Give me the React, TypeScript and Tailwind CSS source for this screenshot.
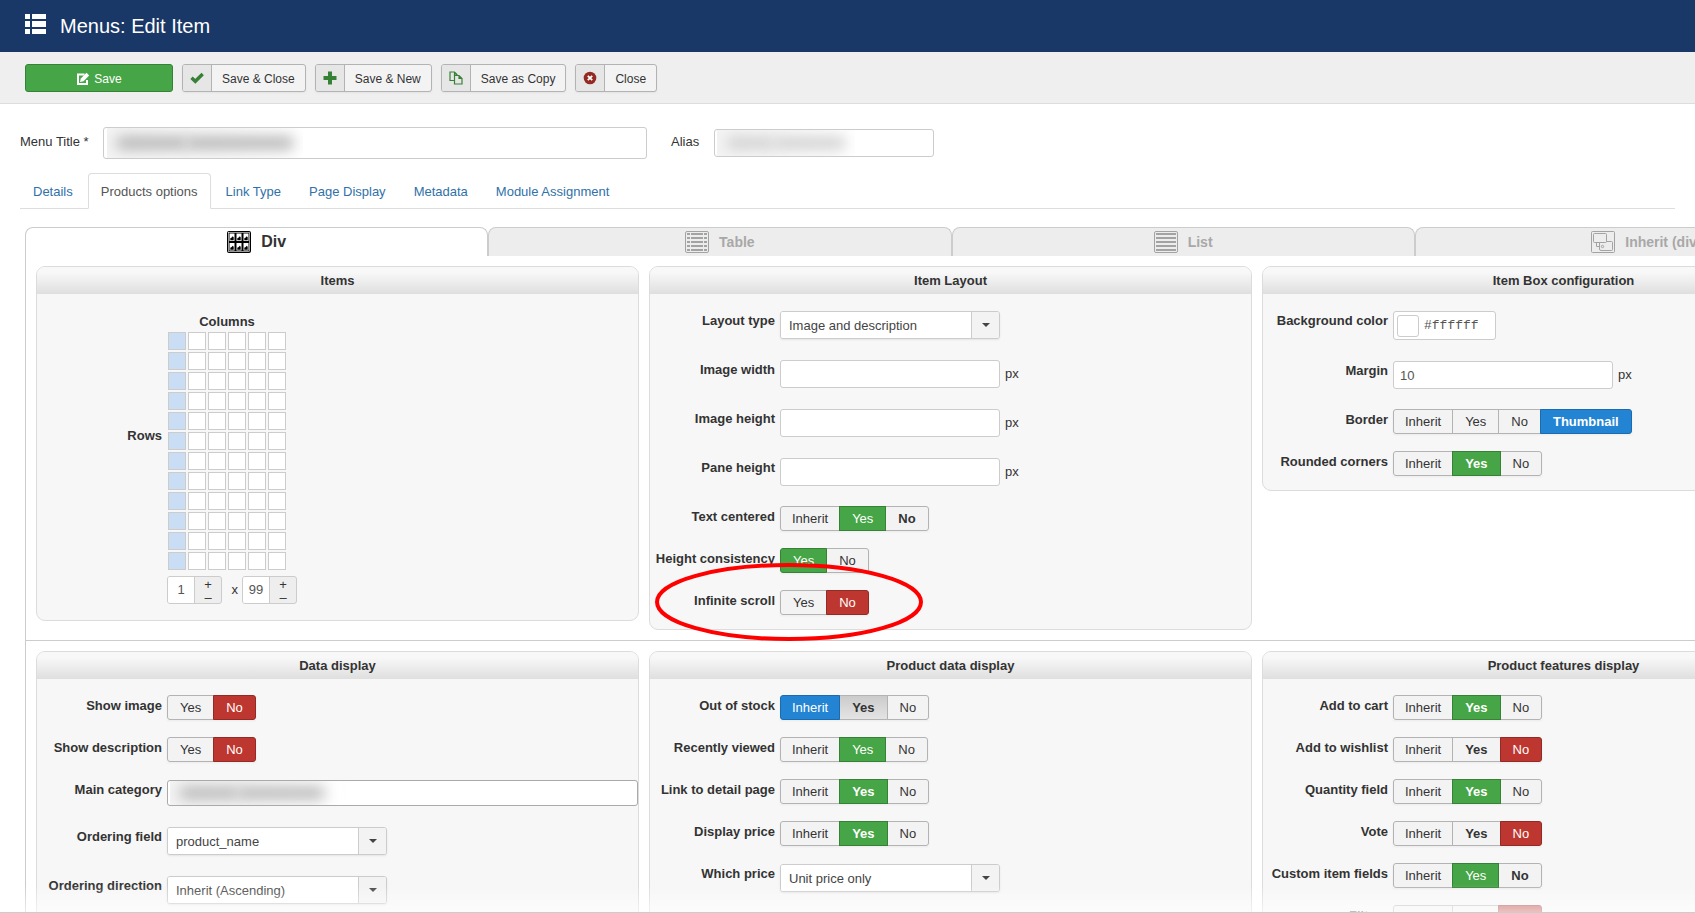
import type { ReactNode } from 'react';
import clsx from 'clsx';

function ListIcon() {
  return (
    <svg width="22" height="22" viewBox="0 0 22 22" fill="#fff" aria-hidden="true">
      <path d="M0 1h5v5H0zM7 1h14v5H7zM0 8h5v6H0zM7 8h14v6H7zM0 16h5v5H0zM7 16h14v5H7z" />
    </svg>
  );
}

function EditIcon() {
  return (
    <svg width="14" height="14" viewBox="0 0 14 14" aria-hidden="true">
      <path d="M8.500 2.500H2v9.500h9V8" fill="none" stroke="#fff" strokeWidth="2" />
      <path d="M4 10l.8-3.500L10.500.800 13.200 3.500 7.500 9.200z" fill="#fff" />
    </svg>
  );
}

function CheckIcon() {
  return (
    <svg width="14" height="14" viewBox="0 0 14 14" aria-hidden="true">
      <path d="M1.500 6.800L5.300 10.300 12.700 3" fill="none" stroke="#378137" strokeWidth="3.400" />
    </svg>
  );
}

function PlusIcon() {
  return (
    <svg width="14" height="14" viewBox="0 0 14 14" fill="#378137" aria-hidden="true">
      <path d="M5 .500h4V5h4.500v4H9v4.500H5V9H.500V5H5z" />
    </svg>
  );
}

function CopyIcon() {
  return (
    <svg width="14" height="14" viewBox="0 0 14 14" fill="none" stroke="#378137" strokeWidth="1.200" aria-hidden="true">
      <path d="M5 9.500H1V1h4.500L8 3.500V5M5.500 1v3H8" />
      <path d="M5.500 4.500h4.500l3 3v5.500H5.500zM10 4.500v3h3" />
    </svg>
  );
}

function CancelIcon() {
  return (
    <svg width="14" height="14" viewBox="0 0 14 14" aria-hidden="true">
      <circle cx="7" cy="7" r="6.300" fill="#942a25" />
      <path d="M4.800 4.800l4.400 4.400M9.200 4.800L4.800 9.200" stroke="#fff" strokeWidth="1.800" />
    </svg>
  );
}

function DivIcon() {
  const xs = [2.5, 9.5, 16.5];
  const ys = [2.5, 12];
  return (
    <svg width="24" height="22" viewBox="0 0 24 22" aria-hidden="true">
      <rect width="24" height="22" rx="2" fill="#000" />
      <rect x="1.500" y="1.500" width="21" height="19" fill="none" stroke="#fff" strokeWidth=".6" />
      {ys.map((y) =>
        xs.map((x) => (
          <g key={`${x}-${y}`}>
            <rect x={x} y={y} width="5" height="7.5" fill="#fff" />
            <path d={`M${x + 0.8} ${y + 6.8}v-2l1.400-.8 1-1.200 1 1v3z`} fill="#000" />
          </g>
        )),
      )}
    </svg>
  );
}

function TableIcon() {
  return (
    <svg width="24" height="22" viewBox="0 0 24 22" fill="none" stroke="#a3a3a3" aria-hidden="true">
      <rect x=".5" y=".5" width="23" height="21" rx="1.500" />
      <path d="M2 3h20M2 7h20M2 11h20M2 15h20M2 19h20" strokeWidth="2" />
      <path d="M5.500 1v20M18.500 1v20" stroke="#ededed" />
    </svg>
  );
}

function RowsIcon() {
  return (
    <svg width="24" height="22" viewBox="0 0 24 22" fill="none" stroke="#a3a3a3" aria-hidden="true">
      <rect x=".5" y=".5" width="23" height="21" rx="1.500" />
      <path d="M2 3h20M2 7h20M2 11h20M2 15h20M2 19h20" strokeWidth="2" />
    </svg>
  );
}

function InheritIcon() {
  return (
    <svg width="24" height="22" viewBox="0 0 24 22" fill="none" stroke="#a3a3a3" aria-hidden="true">
      <rect x=".5" y=".5" width="23" height="21" rx="1" />
      <rect x="2.500" y="2.500" width="13" height="9" rx="1" />
      <path d="M15.500 10.500h5a1 1 0 0 1 1 1v7a1 1 0 0 1-1 1h-10.500a1.500 1.500 0 0 1-1.500-1.500v-6.500" />
      <path d="M5.500 11.500v4h3" />
      <circle cx="11.500" cy="15.500" r="1.200" />
    </svg>
  );
}

function ToolbarButton({ icon, children }: { icon: ReactNode; children: ReactNode }) {
  return (
    <button
      type="button"
      className="flex h-7 items-stretch overflow-hidden rounded-[3px] border border-[#b3b3b3] bg-[#f3f3f3] text-xs text-[#333] shadow-[0_1px_2px_rgba(0,0,0,0.05)]"
    >
      <span className="flex w-[29px] items-center justify-center border-r border-[#b3b3b3] bg-[#e6e6e6]">
        {icon}
      </span>
      <span className="flex items-center px-[10px] pt-px">{children}</span>
    </button>
  );
}

type Tone = 'green' | 'red' | 'blue' | 'pressed';
type Option = { text: string; tone?: Tone; bold?: boolean };

const tones: Record<Tone, string> = {
  green: 'z-10 border-[#378137] bg-[#46a546] text-white',
  red: 'z-10 border-[#942a25] bg-[#bd362f] text-white',
  blue: 'z-10 border-[#1a6bb0] bg-[#2384d3] text-white',
  pressed: 'border-[#b3b3b3] bg-linear-to-b from-[#cbcbcb] to-[#e4e4e4] text-[#333]',
};

function Toggle({ label, options }: { label: string; options: Option[] }) {
  return (
    <div role="group" aria-label={label} className="flex shadow-[0_1px_2px_rgba(0,0,0,0.05)]">
      {options.map((option) => (
        <button
          key={option.text}
          type="button"
          className={clsx(
            'relative -ml-px h-[25px] border text-[13px] leading-5 first:ml-0 first:rounded-l-[3px] last:rounded-r-[3px]',
            option.text === 'Inherit' ? 'px-[11px]' : 'px-3',
            option.tone ? tones[option.tone] : 'border-[#b3b3b3] bg-[#f3f3f3] text-[#333]',
            option.bold && 'font-bold',
          )}
        >
          {option.text}
        </button>
      ))}
    </div>
  );
}

function Field({ label, id, children }: { label: string; id?: string; children: ReactNode }) {
  const style = 'w-[125px] shrink-0 text-right text-[13px] leading-[22px] font-bold whitespace-nowrap';
  return (
    <div className="relative flex items-start gap-[5px]">
      {id ? (
        <label htmlFor={id} className={style}>
          {label}
        </label>
      ) : (
        <span className={style}>{label}</span>
      )}
      {children}
    </div>
  );
}

function ToggleField({ label, options, children }: { label: string; options: Option[]; children?: ReactNode }) {
  return (
    <Field label={label}>
      <Toggle label={label} options={options} />
      {children}
    </Field>
  );
}

function PixelField({ label, id, value }: { label: string; id: string; value?: string }) {
  return (
    <Field label={label} id={id}>
      <div className="flex items-center gap-[5px] pt-px pb-[3px]">
        <input
          id={id}
          type="text"
          defaultValue={value}
          className="h-7 w-[220px] rounded-[3px] border border-[#ccc] bg-white px-[6px] text-[13px] text-[#555]"
        />
        <span className="text-[13px]">px</span>
      </div>
    </Field>
  );
}

function SelectField({ label, id, value }: { label: string; id: string; value: string }) {
  return (
    <Field label={label} id={id}>
      <div className="pt-px pb-[3px]">
        <div className="flex h-7 w-[220px] overflow-hidden rounded-[3px] border border-[#ccc] bg-white shadow-[0_1px_2px_rgba(0,0,0,0.08)]">
          <select id={id} className="min-w-0 flex-1 appearance-none bg-white px-2 pt-px text-[13px] text-[#444]">
            <option>{value}</option>
          </select>
          <span className="flex w-7 items-center justify-center border-l border-[#ccc] bg-[#f3f3f3]">
            <svg width="8" height="4" viewBox="0 0 8 4" aria-hidden="true">
              <path d="M0 0h8L4 4z" fill="#444" />
            </svg>
          </span>
        </div>
      </div>
    </Field>
  );
}

function Panel({ title, children }: { title: string; children: ReactNode }) {
  return (
    <section className="rounded-[9px] border border-[#dcdcdc] bg-[#f7f7f7]">
      <h3 className="rounded-t-[8px] bg-linear-to-b from-[#f8f8f8] from-20% to-[#dfdfdf] pt-px text-center text-[13px] leading-[26px] font-bold">
        {title}
      </h3>
      <div className="flex flex-col gap-[17px] pt-4 pb-[14px]">{children}</div>
    </section>
  );
}

function Stepper({ label, value }: { label: string; value: string }) {
  return (
    <div className="flex h-7 overflow-hidden rounded-[3px] border border-[#ccc] bg-[#eee]">
      <input
        type="text"
        aria-label={label}
        defaultValue={value}
        className="w-[27px] border-r border-[#ccc] bg-white text-center text-[13px] text-[#555]"
      />
      <div className="flex w-[26px] flex-col text-[13px] leading-[13px]">
        <button type="button" aria-label={`More ${label}`} className="h-[15px]">
          +
        </button>
        <button type="button" aria-label={`Fewer ${label}`} className="h-[11px] leading-[11px]">
          –
        </button>
      </div>
    </div>
  );
}

function ItemGrid() {
  return (
    <div className="flex flex-col">
      <div className="flex items-center gap-[5px]">
        <span className="w-[125px] pb-2 text-right text-[13px] font-bold">Rows</span>
        <div className="pl-px">
          <p className="pt-[2px] text-center text-[13px] leading-5 font-bold">Columns</p>
          <div className="grid grid-cols-6 gap-[2px]">
            {Array.from({ length: 72 }, (_, i) => (
              <span
                key={i}
                className={clsx('size-[18px] border border-[#ccc]', i % 6 === 0 ? 'bg-[#c9def5]' : 'bg-white')}
              />
            ))}
          </div>
        </div>
      </div>
      <div className="flex items-center pt-[6px] pb-[2px] pl-[130px] text-[13px]">
        <Stepper label="columns" value="1" />
        <span className="w-5 pr-1 text-right">x</span>
        <Stepper label="rows" value="99" />
      </div>
    </div>
  );
}

// smudge over values that must not be readable
function Redacted({ className }: { className: string }) {
  return (
    <span className={clsx('pointer-events-none absolute overflow-hidden bg-linear-to-r from-[#f4f4f4] to-white', className)}>
      <span className="flex h-full items-center px-[10px]">
        <span className="h-3 flex-2 bg-current blur-[7px]" />
        <span className="h-3 flex-3 bg-current blur-[7px]" />
      </span>
    </span>
  );
}

const pageTabs = ['Details', 'Products options', 'Link Type', 'Page Display', 'Metadata', 'Module Assignment'];

const layoutTabs = [
  { text: 'Div', icon: <DivIcon /> },
  { text: 'Table', icon: <TableIcon /> },
  { text: 'List', icon: <RowsIcon /> },
  { text: 'Inherit (div)', icon: <InheritIcon /> },
];

const inherit: Option = { text: 'Inherit' };
const yes: Option = { text: 'Yes' };
const no: Option = { text: 'No' };
const green: Option = { text: 'Yes', tone: 'green' };
const greenBold: Option = { text: 'Yes', tone: 'green', bold: true };
const red: Option = { text: 'No', tone: 'red' };
const yesBold: Option = { text: 'Yes', bold: true };
const noBold: Option = { text: 'No', bold: true };

export default function App() {
  return (
    <div className="flex h-screen flex-col overflow-hidden bg-white font-['Liberation_Sans',Arial,sans-serif] text-[13px] text-[#333]">
      <header className="flex h-[52px] shrink-0 items-center gap-[13px] bg-[#1a3867] px-[25px] pb-1 text-white">
        <ListIcon />
        <h1 className="pt-1 text-xl">Menus: Edit Item</h1>
      </header>

      <div className="flex h-[52px] shrink-0 items-start gap-[9px] border-b border-[#ddd] bg-[#efefef] px-[25px] pt-3">
        <button
          type="button"
          className="flex h-7 w-[148px] items-center justify-center gap-1 rounded-[3px] border border-[#378137] bg-[#46a546] pt-px text-xs text-white"
        >
          <EditIcon />
          Save
        </button>
        <ToolbarButton icon={<CheckIcon />}>Save &amp; Close</ToolbarButton>
        <ToolbarButton icon={<PlusIcon />}>Save &amp; New</ToolbarButton>
        <ToolbarButton icon={<CopyIcon />}>Save as Copy</ToolbarButton>
        <ToolbarButton icon={<CancelIcon />}>Close</ToolbarButton>
      </div>

      <main className="relative min-h-0 flex-1 overflow-hidden border-b border-[#ccc] pt-[23px]">
        <div className="flex items-center px-5">
          <label htmlFor="title" className="w-[83px] pb-[2px]">
            Menu Title *
          </label>
          <div className="relative">
            <input id="title" type="text" className="block h-8 w-[544px] rounded-[3px] border border-[#ccc] bg-white" />
            <Redacted className="top-px left-1 h-[30px] w-[196px] text-[#b0b0b0]" />
          </div>
          <label htmlFor="alias" className="w-[67px] pb-[2px] pl-6">
            Alias
          </label>
          <div className="relative">
            <input id="alias" type="text" className="block h-7 w-[220px] rounded-[3px] border border-[#ccc] bg-white" />
            <Redacted className="top-px left-[3px] h-[26px] w-[138px] text-[#cecece]" />
          </div>
        </div>

        <nav className="mx-5 mt-[14px] flex gap-[2px] border-b border-[#ddd]">
          {pageTabs.map((tab) => (
            <a
              key={tab}
              href="#"
              className={clsx(
                '-mb-px h-9 rounded-t-[4px] border px-3 pt-[9px] leading-[18px]',
                tab === 'Products options'
                  ? 'border-[#ddd] border-b-white bg-white text-[#555]'
                  : 'border-transparent text-[#3071a9]',
              )}
            >
              {tab}
            </a>
          ))}
        </nav>

        <div className="ml-[25px] w-[calc(100%+158px)] pt-[18px]">
          <div className="grid grid-cols-4">
            {layoutTabs.map((tab) => (
              <button
                key={tab.text}
                type="button"
                className={clsx(
                  'flex h-[29px] items-center justify-center gap-[10px] rounded-t-[8px] border border-b-0 border-[#ccc] font-bold',
                  tab.text === 'Div' ? 'bg-white text-base' : 'bg-[#ededed] text-sm text-[#a8a8a8]',
                )}
              >
                {tab.icon}
                <span>{tab.text}</span>
              </button>
            ))}
          </div>

          <div className="border-l border-[#ccc]">
            <div className="grid grid-cols-3 items-start gap-[10px] border-b border-[#ccc] pt-[10px] pr-[13px] pb-[10px] pl-[10px]">
              <Panel title="Items">
                <ItemGrid />
              </Panel>

              <Panel title="Item Layout">
                <SelectField label="Layout type" id="layout-type" value="Image and description" />
                <PixelField label="Image width" id="image-width" />
                <PixelField label="Image height" id="image-height" />
                <PixelField label="Pane height" id="pane-height" />
                <ToggleField label="Text centered" options={[inherit, green, noBold]} />
                <ToggleField label="Height consistency" options={[green, no]} />
                <ToggleField label="Infinite scroll" options={[yes, red]}>
                  <svg
                    className="pointer-events-none absolute -top-[27px] left-[5px] z-20"
                    width="268"
                    height="78"
                    viewBox="0 0 268 78"
                    aria-hidden="true"
                  >
                    <ellipse cx="134" cy="39" rx="132" ry="37" fill="none" stroke="#f00" strokeWidth="4" />
                  </svg>
                </ToggleField>
              </Panel>

              <Panel title="Item Box configuration">
                <Field label="Background color" id="background">
                  <div className="pt-px pb-[3px]">
                    <div className="flex h-[29px] w-[103px] items-center gap-[5px] rounded-[3px] border border-[#ccc] bg-white pl-[3px]">
                      <span className="size-[22px] rounded-[3px] border border-[#ccc] bg-white" />
                      <input
                        id="background"
                        type="text"
                        defaultValue="#ffffff"
                        className="w-16 min-w-0 bg-transparent font-['Liberation_Mono',monospace] text-[13px] text-[#555]"
                      />
                    </div>
                  </div>
                </Field>
                <PixelField label="Margin" id="margin" value="10" />
                <ToggleField
                  label="Border"
                  options={[inherit, yes, no, { text: 'Thumbnail', tone: 'blue', bold: true }]}
                />
                <ToggleField label="Rounded corners" options={[inherit, greenBold, no]} />
              </Panel>
            </div>

            <div className="grid grid-cols-3 gap-[10px] pt-[10px] pr-[13px] pb-[10px] pl-[10px]">
              <Panel title="Data display">
                <ToggleField label="Show image" options={[yes, red]} />
                <ToggleField label="Show description" options={[yes, red]} />
                <Field label="Main category" id="category">
                  <div className="relative flex-1 pt-px pb-[3px]">
                    <input
                      id="category"
                      type="text"
                      className="block h-[26px] w-full rounded-[3px] border border-[#aaa] bg-white"
                    />
                    <Redacted className="top-[2px] left-[3px] h-6 w-[180px] pr-4 text-[#b4b4b4]" />
                  </div>
                </Field>
                <SelectField label="Ordering field" id="ordering-field" value="product_name" />
                <SelectField label="Ordering direction" id="ordering-direction" value="Inherit (Ascending)" />
              </Panel>

              <Panel title="Product data display">
                <ToggleField
                  label="Out of stock"
                  options={[
                    { text: 'Inherit', tone: 'blue' },
                    { text: 'Yes', tone: 'pressed', bold: true },
                    no,
                  ]}
                />
                <ToggleField label="Recently viewed" options={[inherit, green, no]} />
                <ToggleField label="Link to detail page" options={[inherit, greenBold, no]} />
                <ToggleField label="Display price" options={[inherit, greenBold, no]} />
                <SelectField label="Which price" id="which-price" value="Unit price only" />
              </Panel>

              <Panel title="Product features display">
                <ToggleField label="Add to cart" options={[inherit, greenBold, no]} />
                <ToggleField label="Add to wishlist" options={[inherit, yesBold, red]} />
                <ToggleField label="Quantity field" options={[inherit, greenBold, no]} />
                <ToggleField label="Vote" options={[inherit, yesBold, red]} />
                <ToggleField label="Custom item fields" options={[inherit, green, noBold]} />
                <div className="opacity-75">
                  <ToggleField label="Filters" options={[inherit, yes, { text: 'No', tone: 'red', bold: true }]} />
                </div>
              </Panel>
            </div>
          </div>
        </div>

        <div className="pointer-events-none absolute inset-x-0 bottom-0 z-30 h-7 bg-linear-to-b from-transparent to-white/60" />
      </main>
    </div>
  );
}
